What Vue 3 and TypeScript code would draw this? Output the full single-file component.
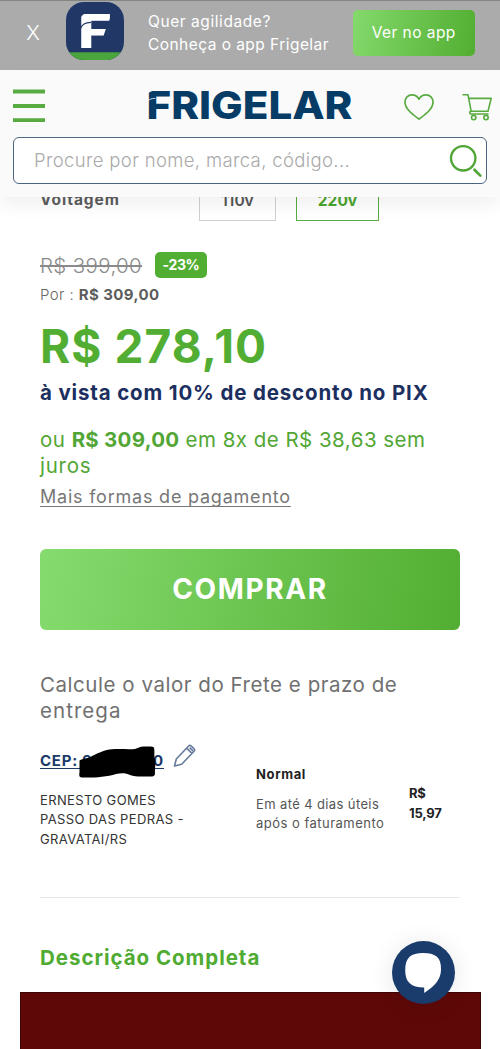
<script setup lang="ts">
import { ref } from 'vue'

interface Voltage {
  label: string
  selected: boolean
}

const voltages: Voltage[] = [
  { label: '110v', selected: false },
  { label: '220v', selected: true },
]
const address: string[] = ['ERNESTO GOMES', 'PASSO DAS PEDRAS -', 'GRAVATAI/RS']
const search = ref('')
</script>

<template>
  <div class="page">
    <div class="promo">
      <button class="close">X</button>
      <svg class="app-icon" viewBox="0 0 58 58" width="58" height="58">
        <defs>
          <clipPath id="app-shape"><rect width="58" height="58" rx="18" /></clipPath>
        </defs>
        <g clip-path="url(#app-shape)">
          <rect width="58" height="58" fill="#213867" />
          <rect y="50.3" width="58" height="8" fill="#4ba53d" />
        </g>
        <text class="mark" transform="translate(12 45.7) scale(1.23 1)" font-size="47">F</text>
        <path d="M14.500 26.500C16 22 19 20.800 25 20.400" fill="none" stroke="#213867" stroke-width="1.200" />
        <path d="M13 10V19C15.500 13.500 17 12 21 11.300V10Z" fill="#213867" />
        <path d="M46 10L42.700 20.500H47V10ZM40.500 25L37.500 34H42V25Z" fill="#213867" />
      </svg>
      <p class="promo-text">
        <span class="promo-a">Quer agilidade?</span><br />
        <span class="promo-b">Conheça o app Frigelar</span>
      </p>
      <button class="open-app">Ver no app</button>
    </div>

    <header class="header">
      <div class="nav">
        <svg class="menu" width="32" height="34" viewBox="0 0 32 34">
          <path d="M0 2.500H32M0 17H32M0 31.200H32" stroke="#58ab40" stroke-width="3.800" />
        </svg>
        <svg class="logo" width="216" height="46" viewBox="0 -6 216 46">
          <text class="wordmark" x="-.5" y="30.400" textLength="206" lengthAdjust="spacingAndGlyphs">FRIGELAR</text>
          <path d="M0 12.800C2 10.300 4 9.600 8.500 9.300" fill="none" stroke="#fafafa" stroke-width=".8" />
          <path d="M0 1V6.500C1.500 3.500 2.500 2.700 5 2.300V1Z" fill="#fafafa" />
        </svg>
        <svg class="heart" width="32" height="28" viewBox="0 0 32 28">
          <path d="M16 26.2C10 21.5 2 16 2 9.2C2 5 5 1.8 9 1.8C12.3 1.8 14.8 3.7 16 6.2C17.2 3.7 19.7 1.8 23 1.8C27 1.8 30 5 30 9.2C30 16 22 21.5 16 26.2Z" fill="none" stroke="#58ab40" stroke-width="1.7" stroke-linejoin="round" />
        </svg>
        <svg class="cart" width="31" height="28" viewBox="0 0 31 28" fill="none" stroke="#58ab40" stroke-width="1.6" stroke-linejoin="round">
          <path d="M.5 1.8H6L9.2 18.4M6.8 5.4H29.2L26 18.2H9C7.2 18.2 7.2 21 9 21H26.6" />
          <circle cx="11.7" cy="24.6" r="2.2" />
          <circle cx="24" cy="24.6" r="2.2" />
        </svg>
      </div>
      <div class="search">
        <input v-model="search" type="text" placeholder="Procure por nome, marca, código..." />
        <svg width="34" height="34" viewBox="0 0 34 34" fill="none" stroke="#4fa535">
          <circle cx="14.2" cy="14.3" r="12.200" stroke-width="2.300" />
          <path d="M25.500 25.800L31.300 31.600" stroke-width="2.700" stroke-linecap="round" />
        </svg>
      </div>
    </header>

    <main class="product">
      <div class="voltage">
        <span class="voltage-label">Voltagem</span>
        <button v-for="v in voltages" :key="v.label" class="option" :class="{ selected: v.selected }">
          {{ v.label }}
        </button>
      </div>

      <div class="old-price"><s>R$ 399,00</s><span class="badge">-23%</span></div>
      <p class="por">Por : <b>R$ 309,00</b></p>
      <p class="price">R$ 278,10</p>
      <p class="pix">à vista com 10% de desconto no PIX</p>
      <p class="installments">ou <b>R$ 309,00</b> em 8x de R$ 38,63 sem<br /><span class="juros">juros</span></p>
      <p class="more"><a>Mais formas de pagamento</a></p>
      <button class="buy">COMPRAR</button>

      <p class="freight-title">Calcule o valor do Frete e prazo de<br /><span class="entrega">entrega</span></p>
      <div class="freight">
        <div class="destination">
          <div class="cep-row">
            <span class="cep"><span>CEP: 9</span><span>0</span></span>
            <svg class="redaction" width="80" height="34" viewBox="0 0 80 34">
              <path d="M1.500 15.500C5 13 10 14 14 11C20 8 27 4.500 34 4.200C42 3.700 50 4.500 57 4L63 1.800C68 1.500 73 1.500 75.500 2C77 4 76 9 76.500 13C78.500 17 76.500 22 77 29C76.500 32 74 31.500 70 31.500C63 31.500 57 32 52 30C48 28 44 27.500 38 29C28 32 14 33 4 32.500C1 32.500 1 31 1.500 27Z" fill="#000" />
            </svg>
            <svg class="pencil" width="24" height="24" viewBox="0 0 24 24" fill="none" stroke="#667a9b" stroke-width="1.600" stroke-linejoin="round">
              <path d="M1.500 22L3.300 15L15.600 2C16.300 1.200 17.200 1.200 18 1.900L21 4.700C21.800 5.500 21.800 6.500 21 7.300L8.700 20.200ZM13.600 4.200L19 9.400M16.600 3.600L20 6.800" />
            </svg>
          </div>
          <p class="address"><span v-for="line in address" :key="line">{{ line }}</span></p>
        </div>
        <div class="shipping">
          <b>Normal</b>
          <p>Em até 4 dias úteis<br /><span class="apos">após o faturamento</span></p>
        </div>
        <div class="cost">R$<br />15,97</div>
      </div>

      <hr />
      <h2>Descrição Completa</h2>
      <div class="banner"></div>
    </main>

    <button class="chat" aria-label="Chat">
      <svg width="63" height="63" viewBox="0 0 63 63">
        <path d="M31 12C43 12 49.500 16 49 28.500C49 38 43 45 32.200 52V46.500C19 46.300 13.200 41.500 13.200 29C13.200 16.500 19 12 31 12Z" fill="#fff" />
      </svg>
    </button>
  </div>
</template>

<style>
body {
  margin: 0;
  background: #fff;
}
</style>

<style scoped>
.page {
  position: relative;
  width: 500px;
  height: 1049px;
  overflow: hidden;
  background: #fff;
  font-family: Inter, 'Liberation Sans', sans-serif;
  color: #666;
}
p,
h2 {
  margin: 0;
  white-space: nowrap;
}
button {
  padding: 0;
  border: 0;
  font-family: inherit;
}
svg {
  display: block;
  flex: none;
}

.promo {
  display: flex;
  box-sizing: border-box;
  height: 70px;
  border-top: 1px solid #858585;
  background: #ababab;
  color: #fff;
  font-size: 15.5px;
}
.close {
  width: 14px;
  height: 24px;
  margin: 20px 0 0 26px;
  background: none;
  color: #fff;
  font-size: 20.5px;
  font-weight: 300;
  line-height: 24px;
}
.app-icon {
  margin: 1px 0 0 26px;
}
.mark {
  font-family: Inter, sans-serif;
  font-weight: 800;
  fill: #fff;
}
.promo-text {
  width: 205px;
  margin: 8.500px 0 0 24px;
  line-height: 23.500px;
}
.promo-a {
  letter-spacing: 0.57px;
}
.promo-b {
  letter-spacing: 0.45px;
}
.open-app {
  width: 121.500px;
  height: 46px;
  margin-top: 8.500px;
  border-radius: 5px;
  background: linear-gradient(100deg, #84d96b, #52ae32);
  color: #fff;
  font-size: 15.5px;
  letter-spacing: 0.44px;
}

.header {
  position: relative;
  z-index: 2;
  box-sizing: border-box;
  height: 127px;
  padding: 19px 13px 0;
  background: #fafafa;
  box-shadow: 0 8px 18px rgba(0, 0, 0, 0.06);
}
.nav {
  display: flex;
  height: 48px;
}
.logo {
  margin: -6px 0 0 102px;
}
.wordmark {
  font-family: Inter, sans-serif;
  font-size: 38.5px;
  font-weight: 800;
  fill: #063c66;
}
.heart {
  margin: 3.500px 0 0 40px;
}
.cart {
  margin: 3.500px 0 0 27px;
}
.search {
  display: flex;
  box-sizing: border-box;
  width: 474px;
  height: 47px;
  border: 1px solid #4a6580;
  border-radius: 6px;
  background: #fff;
}
.search input {
  flex: 1;
  min-width: 0;
  padding: 0 0 2px 20px;
  border: 0;
  outline: 0;
  background: none;
  font: 300 18.5px Inter, sans-serif;
  letter-spacing: 0.36px;
}
.search input::placeholder {
  color: #aaa;
  opacity: 1;
}
.search svg {
  margin: 5.500px 3px 0 0;
}

.product {
  margin-top: -17px;
  padding: 0 40px;
}
.voltage {
  display: flex;
  height: 41px;
}
.voltage-label {
  width: 159px;
  color: #5c5c5c;
  font-size: 15.5px;
  font-weight: 700;
  line-height: 39px;
  letter-spacing: 0.9px;
}
.option {
  box-sizing: border-box;
  width: 77px;
  height: 41px;
  margin-right: 20px;
  border: 1px solid #d0d0d0;
  background: #fff;
  color: #555;
  font-size: 15.5px;
  font-weight: 600;
  line-height: 36px;
}
.option.selected {
  width: 83px;
  border-color: #58ab40;
  color: #4ba52f;
  font-weight: 700;
}
.old-price {
  display: flex;
  align-items: center;
  height: 26px;
  margin-top: 31px;
}
.old-price s {
  width: 115px;
  color: #8a8a8a;
  font-size: 20.5px;
  font-weight: 300;
  letter-spacing: 0.35px;
}
.badge {
  width: 52px;
  height: 26px;
  border-radius: 5px;
  background: #52ae32;
  color: #fff;
  font-size: 14px;
  font-weight: 700;
  line-height: 26px;
  letter-spacing: -0.35px;
  text-align: center;
}
.por {
  height: 20px;
  margin-top: 7px;
  font-size: 15px;
  font-weight: 300;
  line-height: 20px;
  letter-spacing: 0.4px;
}
.por b {
  color: #5c5c5c;
  font-weight: 700;
}
.price {
  margin-top: 13px;
  color: #52ae32;
  font-size: 46px;
  font-weight: 700;
  line-height: 56px;
  letter-spacing: 1.1px;
}
.pix {
  margin-top: 5px;
  color: #1d2f5f;
  font-size: 20.5px;
  font-weight: 700;
  line-height: 27px;
  letter-spacing: 0.84px;
}
.installments {
  margin-top: 20.500px;
  color: #52a635;
  font-size: 20.5px;
  line-height: 26px;
  letter-spacing: 0.48px;
}
.installments b {
  letter-spacing: 0.25px;
}
.juros {
  letter-spacing: 0.75px;
}
.more {
  margin-top: 7px;
  color: #777;
  font-size: 18px;
  line-height: 22px;
  letter-spacing: 0.78px;
}
.more a {
  text-decoration: underline;
  text-decoration-thickness: 1px;
  text-underline-offset: 3px;
  text-decoration-skip-ink: none;
}
.buy {
  display: block;
  width: 420px;
  height: 81px;
  margin-top: 41px;
  border-radius: 6px;
  background: linear-gradient(100deg, #86db6e, #52ae32);
  color: #fff;
  font-size: 28px;
  font-weight: 700;
  letter-spacing: 1.6px;
}
.freight-title {
  margin-top: 42px;
  color: #707070;
  font-size: 20.5px;
  line-height: 26px;
  letter-spacing: 0.54px;
}
.entrega {
  letter-spacing: 1.05px;
}
.freight {
  display: flex;
  height: 117px;
  margin-top: 20px;
}
.destination {
  width: 216px;
}
.cep-row {
  position: relative;
  display: flex;
  height: 47px;
}
.cep {
  display: flex;
  justify-content: space-between;
  box-sizing: border-box;
  width: 124px;
  height: 25px;
  padding-top: 4px;
  border-bottom: 1px solid #1b3a69;
  color: #1b3a69;
  font-size: 15px;
  font-weight: 700;
  letter-spacing: 0.77px;
}
.cep span {
  line-height: 25px;
}
.redaction {
  position: absolute;
  top: 1px;
  left: 38px;
}
.pencil {
  margin: 0 0 0 9px;
}
.address {
  color: #333;
  font-size: 13px;
  line-height: 19.500px;
  letter-spacing: 0.36px;
}
.address span {
  display: block;
}
.shipping {
  width: 153px;
  padding-top: 20px;
  font-size: 13px;
}
.shipping b {
  display: block;
  color: #222;
  font-weight: 700;
  line-height: 20px;
  letter-spacing: 0.63px;
}
.shipping p {
  margin-top: 11px;
  color: #555;
  line-height: 19.500px;
  letter-spacing: 0.38px;
}
.shipping .apos {
  letter-spacing: 0.48px;
}
.cost {
  padding-top: 40.500px;
  color: #222;
  font-size: 13px;
  font-weight: 700;
  line-height: 19.500px;
  letter-spacing: -0.2px;
}
hr {
  height: 1px;
  margin: 36px 0 0;
  border: 0;
  background: #e8e8e8;
}
h2 {
  margin-top: 46px;
  color: #4fab32;
  font-size: 20.5px;
  font-weight: 700;
  line-height: 28px;
  letter-spacing: 0.97px;
}
.banner {
  box-sizing: border-box;
  height: 70px;
  margin: 20px -20.500px 0;
  border: 1px solid #3f0505;
  background: #5e0908;
}
.chat {
  position: absolute;
  z-index: 3;
  top: 941px;
  left: 392px;
  width: 63px;
  height: 63px;
  border-radius: 50%;
  background: #193c6c;
  box-shadow: 0 2px 24px rgba(0, 0, 0, 0.1);
}
</style>
